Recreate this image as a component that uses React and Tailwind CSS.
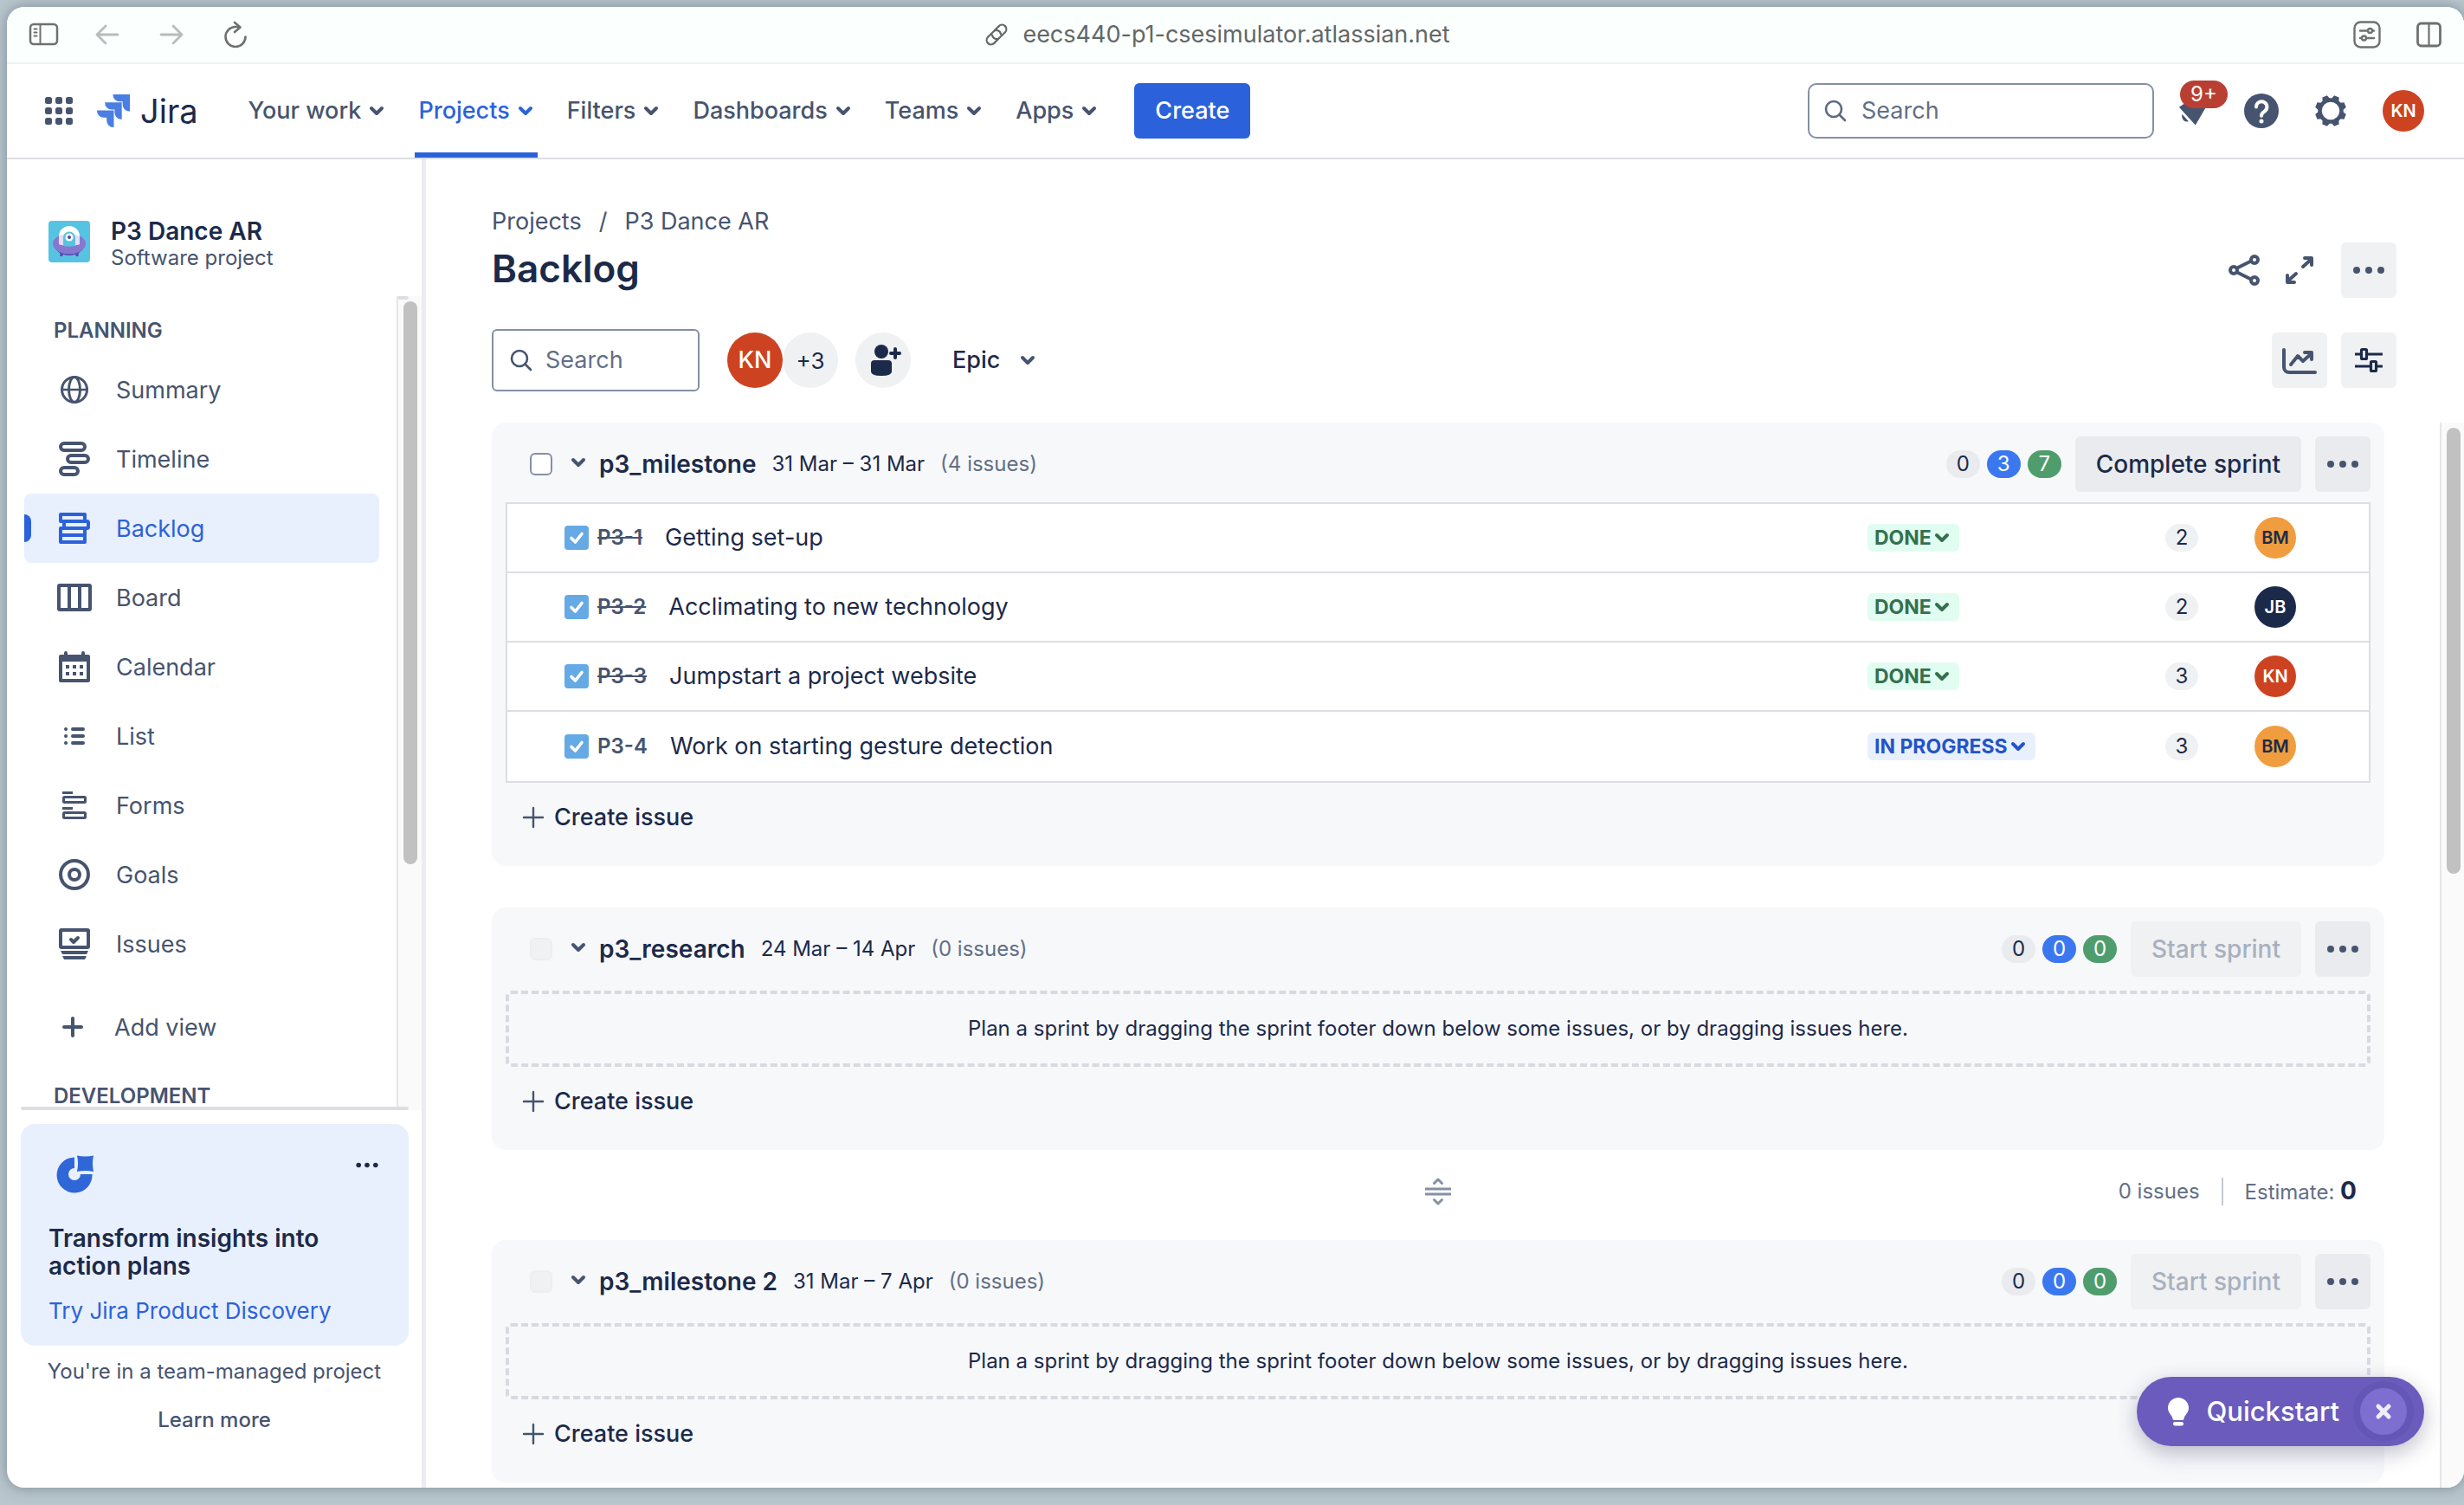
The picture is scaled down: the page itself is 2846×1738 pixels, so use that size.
import React from "react";

const CHEVRON = "M4 7l6 6 6-6";

function Chevron({ className = "size-5", width = 4 }) {
  return (
    <svg viewBox="0 0 20 20" className={className} fill="none" stroke="currentColor" strokeWidth={width} strokeLinecap="round" strokeLinejoin="round" aria-hidden="true">
      <path d={CHEVRON} />
    </svg>
  );
}

function Dots({ className = "w-10" }) {
  return (
    <svg viewBox="0 0 40 10" className={className} fill="currentColor" aria-hidden="true">
      <circle cx="6" cy="5" r="4" />
      <circle cx="20" cy="5" r="4" />
      <circle cx="34" cy="5" r="4" />
    </svg>
  );
}

function SearchIcon() {
  return (
    <svg viewBox="0 0 28 28" className="size-7 shrink-0" fill="none" stroke="currentColor" strokeWidth="2.6" strokeLinecap="round" aria-hidden="true">
      <circle cx="12" cy="12" r="9" />
      <path d="M18.5 18.5l6.500 6.500" />
    </svg>
  );
}

function BrowserBar() {
  return (
    <div className="flex h-[66px] shrink-0 items-center border-b-2 border-[#eff1f1] bg-[#fbfffe] pl-6 pr-6 text-[#6f7170]">
      <button aria-label="Toggle sidebar" className="mr-[42px]">
        <svg viewBox="0 0 36 28" className="h-7 w-9" fill="none" stroke="currentColor" strokeWidth="2.500" strokeLinecap="round">
          <rect x="3" y="2" width="31" height="23" rx="4" />
          <path d="M14.500 2v23M7.500 7.500h3M7.500 11.500h3M7.500 15.500h3" strokeWidth="2" />
        </svg>
      </button>
      <button aria-label="Back" className="mr-[46px] text-[#b9bcbb]">
        <svg viewBox="0 0 28 24" className="h-6 w-7" fill="none" stroke="currentColor" strokeWidth="2.800" strokeLinecap="round" strokeLinejoin="round">
          <path d="M26 12H2M12 2L2 12l10 10" />
        </svg>
      </button>
      <button aria-label="Forward" className="mr-[46px] text-[#b9bcbb]">
        <svg viewBox="0 0 28 24" className="h-6 w-7" fill="none" stroke="currentColor" strokeWidth="2.800" strokeLinecap="round" strokeLinejoin="round">
          <path d="M2 12h24M16 2l10 10-10 10" />
        </svg>
      </button>
      <button aria-label="Reload">
        <svg viewBox="0 0 28 32" className="h-8 w-7" fill="none" stroke="currentColor" strokeWidth="2.600" strokeLinecap="round" strokeLinejoin="round">
          <path d="M25.500 18.500A11.500 11.500 0 1 1 14 7h5M13 2l6.500 5.500L13 13" />
        </svg>
      </button>
      <div className="flex flex-1 items-center justify-center gap-4 pr-48 text-[27px] text-[#636766]">
        <svg viewBox="0 0 28 28" className="size-7" fill="none" stroke="currentColor" strokeWidth="2.200" strokeLinecap="round">
          <g transform="rotate(-45 14 14)">
            <path d="M12 19H5a5 5 0 0 1 0-10h9a5 5 0 0 1 4 8" />
            <path d="M16 9h7a5 5 0 0 1 0 10h-9a5 5 0 0 1-4-8" />
          </g>
        </svg>
        <span>eecs440-p1-csesimulator.atlassian.net</span>
      </div>
      <button aria-label="Page settings" className="mr-10">
        <svg viewBox="0 0 32 32" className="size-8" fill="none" stroke="currentColor" strokeWidth="2.400" strokeLinecap="round">
          <rect x="1.500" y="1.500" width="29" height="29" rx="7" />
          <path d="M8 11.500h9M22.500 11.500H24M8 20h1.500M15.500 20H24" />
          <circle cx="19.500" cy="11.500" r="2.500" />
          <circle cx="12.500" cy="20" r="2.500" />
        </svg>
      </button>
      <button aria-label="Tabs">
        <svg viewBox="0 0 32 30" className="h-[30px] w-8" fill="none" stroke="currentColor" strokeWidth="2.800">
          <rect x="2.500" y="2" width="26" height="26" rx="4" />
          <path d="M15.500 2v26" strokeWidth="2.200" />
        </svg>
      </button>
    </div>
  );
}

const MENU = ["Your work", "Projects", "Filters", "Dashboards", "Teams", "Apps"];
const LOGO_WING = "M0 0h19.500v19.500h-.700a7.600 7.600 0 0 1-7.600-7.600V8.300H7.600A7.600 7.600 0 0 1 0 .700z";

function TopNav() {
  return (
    <header className="flex h-[110px] shrink-0 items-center border-b-2 border-[#dddee3] pl-11 pr-[46px] text-[#46546f]">
      <button aria-label="App switcher">
        <svg viewBox="0 0 32 32" className="size-8" fill="currentColor">
          {[0, 12, 24].map((y) => [0, 12, 24].map((x) => <rect key={x + "-" + y} x={x} y={y} width="8" height="8" rx="2.500" />))}
        </svg>
      </button>
      <a href="#home" className="ml-7 flex items-center gap-3" aria-label="Jira">
        <svg viewBox="0 0 38 38" className="size-[38px]" fill="#4a7ee2">
          <path d={LOGO_WING} transform="translate(18.500 0)" />
          <path d={LOGO_WING} transform="translate(9.200 9.200)" />
          <path d={LOGO_WING} transform="translate(0 18.400)" />
        </svg>
        <span className="text-[38px] leading-none text-[#1c2a4a]">Jira</span>
      </a>
      <nav className="ml-[54px] flex h-full items-stretch gap-[30px]">
        {MENU.map((label) => {
          const active = label === "Projects";
          return (
            <button
              key={label}
              className={
                "flex items-center gap-2 border-b-[6px] px-1 pt-1.5 text-[27px] font-medium " +
                (active ? "border-[#2b62db] text-[#2b62db]" : "border-transparent")
              }
            >
              {label}
              <Chevron />
            </button>
          );
        })}
      </nav>
      <button className="ml-[38px] h-16 rounded-md bg-[#2b62db] px-6 text-[27px] font-medium text-white">Create</button>
      <label className="ml-auto flex h-16 w-[400px] items-center gap-3 rounded-[10px] border-2 border-[#8590a2] px-4 text-[#5d6a82]">
        <SearchIcon />
        <input aria-label="Search" placeholder="Search" className="min-w-0 flex-1 bg-transparent pl-1 text-[27px] outline-none placeholder:text-[#626f86]" />
      </label>
      <button aria-label="Notifications, more than 9" className="relative ml-6 h-12 w-14">
        <svg viewBox="0 0 40 40" className="absolute left-1 top-2 size-9" fill="currentColor">
          <path d="M1 13L13 5l22 9-13 22z" />
          <path d="M5 22l8 9c-4 3-10-3-8-9z" />
        </svg>
        <span className="absolute -top-[11px] left-[6px] flex h-8 items-center rounded-full bg-[#b93f33] px-3 text-2xl text-white">9+</span>
      </button>
      <button aria-label="Help" className="ml-6">
        <svg viewBox="0 0 40 40" className="size-10" fill="none">
          <circle cx="20" cy="20" r="20" fill="currentColor" />
          <path d="M14 15.500a6.200 6.200 0 1 1 9.500 5.200c-2.300 1.400-3.500 2.300-3.500 5" stroke="#fff" strokeWidth="4" strokeLinecap="round" />
          <circle cx="20" cy="32" r="2.500" fill="#fff" />
        </svg>
      </button>
      <button aria-label="Settings" className="ml-10">
        <svg viewBox="-20 -20 40 40" className="size-10" fill="none" stroke="currentColor">
          <circle r="12.500" strokeWidth="4.500" />
          {[0, 45, 90, 135, 180, 225, 270, 315].map((a) => (
            <path key={a} d="M-4.500 -13.500l1.500-4.500h6l1.500 4.500z" fill="currentColor" stroke="none" transform={`rotate(${a + 22.500})`} />
          ))}
        </svg>
      </button>
      <button aria-label="Profile" className="ml-10 flex size-12 items-center justify-center rounded-full bg-[#cd4322] text-[20px] font-semibold text-white">KN</button>
    </header>
  );
}

const icon = { fill: "none", stroke: "currentColor", strokeWidth: 4, className: "size-12 shrink-0", viewBox: "0 0 48 48", "aria-hidden": true };

const ICONS = {
  Summary: (
    <svg {...icon} strokeWidth="3">
      <circle cx="24" cy="24" r="14.500" />
      <ellipse cx="24" cy="24" rx="6.500" ry="14.500" />
      <path d="M9 24h30" strokeWidth="2.500" />
    </svg>
  ),
  Timeline: (
    <svg {...icon}>
      <rect x="8" y="6" width="28" height="8" rx="4" />
      <rect x="16" y="20" width="24" height="8" rx="4" />
      <rect x="8" y="34" width="20" height="8" rx="4" />
    </svg>
  ),
  Backlog: (
    <svg {...icon} strokeLinejoin="round">
      <path d="M36 16V8H8v8h30.500q1.500 0 1.500 1.500v5q0 1.500-1.500 1.500H12v-8M36 24v16H8V24h6M8 32h28" />
    </svg>
  ),
  Board: (
    <svg {...icon} strokeLinejoin="round">
      <rect x="6" y="10" width="36" height="28" rx="1" />
      <path d="M18 10v28M30 10v28" />
    </svg>
  ),
  Calendar: (
    <svg {...icon} strokeLinejoin="round">
      <path d="M8 12h32v28H8zM8 16h32M14 12V8M34 12V8" strokeLinecap="round" />
      <path d="M14 24h4M22 24h4M30 24h4M14 32h4M22 32h4M30 32h4" />
    </svg>
  ),
  List: (
    <svg {...icon} strokeLinecap="round">
      <path d="M22 16h12M22 24h12M22 32h12M14 16h.1M14 24h.1M14 32h.1" />
    </svg>
  ),
  Forms: (
    <svg {...icon} strokeWidth="3">
      <path d="M10 9.500h12M10 27.500h12" />
      <rect x="11.500" y="14.500" width="25" height="6" rx="1" />
      <rect x="11.500" y="32.500" width="25" height="6" rx="1" />
    </svg>
  ),
  Goals: (
    <svg {...icon}>
      <circle cx="24" cy="24" r="16" />
      <circle cx="24" cy="24" r="6" />
    </svg>
  ),
  Issues: (
    <svg {...icon} strokeLinejoin="round">
      <rect x="8" y="8" width="32" height="20" rx="1" />
      <path d="M20 19l3 3 5-5" strokeLinecap="round" />
      <path d="M8 32h32l-2 4H10zM10 38h28l-2 4H12z" fill="currentColor" stroke="none" />
    </svg>
  ),
};

function Sidebar() {
  return (
    <aside className="flex w-[484px] shrink-0 flex-col border-r-[5px] border-[#ebecef] text-[#46546f]">
      <div className="flex h-[158px] shrink-0 items-start gap-6 pl-12 pt-[68px]">
        <svg viewBox="0 0 48 48" className="mt-[3px] size-12 shrink-0">
          <rect width="48" height="48" rx="4" fill="#57c3e2" />
          <path d="M13 36h4l-.500 5h-3zM31 36h4l-.500 5h-3z" fill="#5a4cb4" />
          <path d="M8 32c8 10 24 10 32 0-7 9-25 9-32 0z" fill="#5a4cb4" stroke="#5a4cb4" />
          <ellipse cx="24" cy="26.500" rx="19" ry="11.500" fill="#8777d0" />
          <path d="M12 27V18a12 12 0 0 1 24 0v9q-12 4-24 0z" fill="#fff" />
          <path d="M12 27V17q3-2 24 0v10q-12 4-24 0z" fill="#e3dff5" />
          <path d="M17 29V19.500a7 7 0 0 1 14 0V29q-7 1.500-14 0z" fill="#57c3e2" />
          <circle cx="24" cy="19" r="4.500" fill="#fff" />
          <circle cx="24" cy="19" r="2" fill="#5243aa" />
        </svg>
        <div>
          <p className="text-[28px] leading-[30px] font-semibold text-[#1c2a4a]">P3 Dance AR</p>
          <p className="text-2xl leading-8">Software project</p>
        </div>
      </div>
      <div className="flex min-h-0 flex-1">
        <div className="flex min-w-0 flex-1 flex-col">
          <nav className="min-h-0 flex-1 overflow-hidden pl-5 pr-5">
            <h2 className="mt-3 flex h-14 items-center pl-[34px] text-2xl leading-6 font-semibold">PLANNING</h2>
            {Object.keys(ICONS).map((name) => {
              const active = name === "Backlog";
              return (
                <a
                  key={name}
                  href={"#" + name.toLowerCase()}
                  className={"flex h-20 items-center rounded-lg text-[27px] " + (active ? "bg-[#e9f0fd] text-[#2b62db]" : "")}
                >
                  <span className={"mr-[26px] h-8 w-2 rounded-r-lg " + (active ? "bg-[#2b62db]" : "")} />
                  {ICONS[name]}
                  <span className="pl-6 pt-0.5">{name}</span>
                </a>
              );
            })}
            <button className="mt-4 flex h-20 items-center pl-8 text-[27px]">
              <svg {...icon} strokeLinecap="round">
                <path d="M24 14v20M14 24h20" />
              </svg>
              <span className="pl-6 pt-0.5">Add view</span>
            </button>
            <h2 className="mt-4 pt-3 pl-[34px] text-2xl leading-6 font-semibold">DEVELOPMENT</h2>
          </nav>
          <div className="z-10 -mr-[14px] -mt-1 ml-4 h-1 shrink-0 rounded-full bg-[#dddee3]" />
        </div>
        <div className="w-[29px] border-l-2 border-[#e6e6e8] bg-[#fafafa]" aria-hidden="true">
          <div className="mb-0.5 h-1 w-3 rounded-r-sm bg-[#dddee3]" />
          <div className="ml-[6px] h-[650px] w-4 rounded-full bg-[#c1c1c1]" />
        </div>
      </div>
      <section className="mx-4 mr-[15px] mt-4 rounded-2xl bg-[#e9f0fd] px-8 pb-5 pt-8">
        <div className="flex items-start justify-between">
          <svg viewBox="0 0 48 48" className="ml-1.5 size-12" fill="#3067d8">
            <path d="M24 6.500A20.500 20.500 0 1 0 44.500 26H31a7 7 0 1 1-7-7z" />
            <path d="M27 4.500q9.500 2 19 0-2 9 0 18.500-9.500-2-19 0 2-9.500 0-18.500z" />
          </svg>
          <button aria-label="More" className="mt-3 mr-0.5 text-[#1c2a4a]">
            <Dots className="w-7" />
          </button>
        </div>
        <h3 className="mt-9 text-[28px] leading-8 font-semibold text-[#1c2a4a]">Transform insights into action plans</h3>
        <a href="#discovery" className="mt-4 block text-[26px] leading-10 text-[#2b62db]">Try Jira Product Discovery</a>
      </section>
      <div className="flex flex-col items-center pb-[60px] pt-3 text-2xl">
        <p className="leading-9">You're in a team-managed project</p>
        <button className="mt-5 leading-9 font-medium">Learn more</button>
      </div>
    </aside>
  );
}

function IconButton({ label, children, className = "bg-[#f0f1f3]" }) {
  return (
    <button aria-label={label} className={"flex size-16 shrink-0 items-center justify-center rounded-md text-[#46546f] " + className}>
      {children}
    </button>
  );
}

function PageHeader() {
  return (
    <div className="flex items-end justify-between pr-[78px] pt-[52px]">
      <div className="pb-1">
        <p className="flex gap-5 text-[27px] leading-10 text-[#46546f]">
          <a href="#projects">Projects</a>
          <span>/</span>
          <a href="#dance">P3 Dance AR</a>
        </p>
        <h1 className="mt-1 text-[44px] leading-[60px] font-semibold text-[#1c2a4a]">Backlog</h1>
      </div>
      <div className="flex items-center text-[#46546f]">
        <IconButton label="Share" className="">
          <svg viewBox="0 0 48 48" className="size-12" fill="none" stroke="currentColor" strokeWidth="4">
            <circle cx="12" cy="24" r="4" />
            <circle cx="36" cy="12" r="4" />
            <circle cx="36" cy="36" r="4" />
            <path d="M15 22l17-8.500M15 26l17 8.500" />
          </svg>
        </IconButton>
        <IconButton label="Full screen" className="mr-4">
          <svg viewBox="0 0 48 48" className="size-12" fill="none" stroke="currentColor" strokeWidth="4" strokeLinecap="round" strokeLinejoin="round">
            <path d="M28 20l10-9M30 10h8v8M20 28L10 37M10 30v8h8" />
          </svg>
        </IconButton>
        <IconButton label="More actions">
          <Dots />
        </IconButton>
      </div>
    </div>
  );
}

function Toolbar() {
  return (
    <div className="flex h-[72px] items-center pr-[78px] text-[#1c2a4a]">
      <label className="flex h-full w-60 items-center gap-3.5 rounded-md border-2 border-[#8590a2] px-[18px] text-[#46546f]">
        <SearchIcon />
        <input aria-label="Search backlog" placeholder="Search" className="min-w-0 flex-1 bg-transparent text-[27px] outline-none placeholder:text-[#626f86]" />
      </label>
      <button className="z-10 ml-8 flex size-16 items-center justify-center rounded-full bg-[#cd4322] text-[27px] font-medium text-white">KN</button>
      <button className="flex size-16 items-center justify-center rounded-full bg-[#f0f1f3] text-[26px]">+3</button>
      <button aria-label="Add people" className="ml-5 flex size-16 items-center justify-center rounded-full bg-[#f0f1f3]">
        <svg viewBox="0 0 48 48" className="size-12" fill="currentColor">
          <circle cx="22" cy="14" r="8" />
          <path d="M10 28a4 4 0 0 1 4-4h16a4 4 0 0 1 4 4v9q0 5-12 5t-12-5z" />
          <path d="M38 11v10M33 16h10" stroke="currentColor" strokeWidth="4" strokeLinecap="round" />
        </svg>
      </button>
      <button className="ml-12 flex items-center gap-[22px] text-[27px] font-medium">
        Epic
        <Chevron className="size-5 text-[#46546f]" />
      </button>
      <div className="ml-auto flex gap-4">
        <IconButton label="Insights">
          <svg viewBox="0 0 48 48" className="size-12" fill="none" stroke="currentColor" strokeWidth="4" strokeLinecap="round" strokeLinejoin="round">
            <path d="M6 12v20a6 6 0 0 0 6 6h30M14 29l8-10 6 6 10-9M30 15h8v8" />
          </svg>
        </IconButton>
        <IconButton label="View settings">
          <svg viewBox="0 0 48 48" className="size-12 text-[#1c2a4a]" fill="none" stroke="currentColor" strokeWidth="3.200">
            <path d="M8 17h7M23 17h17M8 31h17M33 31h7" />
            <rect x="15.500" y="11.500" width="6" height="11" rx="1" />
            <rect x="26.500" y="25.500" width="6" height="11" rx="1" />
          </svg>
        </IconButton>
      </div>
    </div>
  );
}

const BADGES = ["bg-[#e9ebee] text-[#1c2a4a]", "bg-[#3b78f0] text-white", "bg-[#4f9d6c] text-white"];

function Sprint({ name, dates, count, totals, action, disabled, children }) {
  return (
    <section className="rounded-2xl bg-[#f7f8fa] px-4 pb-6 pt-4 text-[#1c2a4a]">
      <div className="flex h-16 items-center pl-7">
        <input
          type="checkbox"
          aria-label={"Select " + name}
          disabled={disabled}
          className="size-[26px] shrink-0 appearance-none rounded-md border-2 border-[#8590a2] bg-white disabled:border-[#edeef0] disabled:bg-[#f0f1f3]"
        />
        <button aria-label="Collapse" className="ml-5 text-[#46546f]">
          <Chevron className="-mt-1 size-5" />
        </button>
        <h2 className="ml-3.5 text-[28px] font-semibold">{name}</h2>
        <span className="ml-[18px] text-2xl">{dates}</span>
        <span className="ml-[18px] text-2xl text-[#626f86]">({count} issues)</span>
        <div className="ml-auto flex items-center gap-2">
          {totals.map((n, i) => (
            <span key={i} className={"flex h-8 w-[39px] items-center justify-center rounded-full text-2xl " + BADGES[i]}>
              {n}
            </span>
          ))}
        </div>
        <button
          disabled={disabled}
          className="ml-4 h-16 rounded-md bg-[#e9ebee] px-6 text-[28px] font-medium disabled:bg-[#f0f1f3] disabled:text-[#a8b0bf]"
        >
          {action}
        </button>
        <IconButton label="Sprint actions" className="ml-4 bg-[#e9ebee]">
          <Dots />
        </IconButton>
      </div>
      {children}
      <button className="mt-2 flex h-16 items-center gap-2 pl-4 text-[27px] font-medium">
        <svg viewBox="0 0 32 32" className="size-8 text-[#46546f]" fill="none" stroke="currentColor" strokeWidth="2.400" strokeLinecap="round">
          <path d="M16 5v22M5 16h22" />
        </svg>
        Create issue
      </button>
    </section>
  );
}

const ISSUES = [
  { key: "P3-1", title: "Getting set-up", status: "DONE", points: 2, who: "BM" },
  { key: "P3-2", title: "Acclimating to new technology", status: "DONE", points: 2, who: "JB" },
  { key: "P3-3", title: "Jumpstart a project website", status: "DONE", points: 3, who: "KN" },
  { key: "P3-4", title: "Work on starting gesture detection", status: "IN PROGRESS", points: 3, who: "BM" },
];

const PEOPLE = { BM: "bg-[#f09d3f] text-[#1c2a4a]", JB: "bg-[#1c2a4a] text-white", KN: "bg-[#cd4322] text-white" };

function IssueList() {
  return (
    <ul className="mt-3 border-2 border-[#dddee5] bg-white">
      {ISSUES.map(({ key, title, status, points, who }, i) => {
        const done = status === "DONE";
        return (
          <li key={key} className={"flex h-20 items-center pl-[66px] pr-[84px] " + (i < 3 ? "border-b-2 border-[#dddee5]" : "")}>
            <svg viewBox="0 0 28 28" className="size-7 shrink-0" aria-hidden="true">
              <rect width="28" height="28" rx="4" fill="#65a9e5" />
              <path d="M8 14.500l4.500 4.500L20 9.500" fill="none" stroke="#fff" strokeWidth="3.600" strokeLinecap="round" strokeLinejoin="round" />
            </svg>
            <a href={"#" + key} className={"ml-[10px] text-2xl font-semibold text-[#46546f] " + (done ? "line-through decoration-2" : "")}>
              {key}
            </a>
            <span className="ml-[26px] text-[27px]">{title}</span>
            <div className="ml-auto w-[344px]">
              <button
                className={
                  "flex h-8 items-center gap-0.5 rounded-md pl-2 pr-[10px] text-[23px] font-bold " +
                  (done ? "bg-[#e1fdf1] text-[#35704e]" : "bg-[#e9f0fd] text-[#2453c8]")
                }
              >
                {status}
                <Chevron className="size-5" />
              </button>
            </div>
            <span className="flex h-8 w-[38px] items-center justify-center rounded-full bg-[#f0f1f3] text-2xl">{points}</span>
            <span className={"ml-[65px] flex size-12 items-center justify-center rounded-full text-[20px] font-semibold " + PEOPLE[who]}>{who}</span>
          </li>
        );
      })}
    </ul>
  );
}

function EmptySprint() {
  return (
    <p className="mt-4 flex h-[88px] items-center justify-center rounded-md border-4 border-dashed border-[#d8dae2] text-2xl">
      Plan a sprint by dragging the sprint footer down below some issues, or by dragging issues here.
    </p>
  );
}

function SprintFooter() {
  return (
    <div className="grid h-[104px] grid-cols-[1fr_auto_1fr] items-center pb-2 text-2xl text-[#626f86]">
      <span />
      <svg viewBox="0 0 32 36" className="h-9 w-8 text-[#8590a2]" fill="none" stroke="currentColor" strokeWidth="3" strokeLinejoin="round">
        <path d="M1 15h30M1 21h30" />
        <path d="M11.500 8.500L16 4l4.500 4.500M11.500 27.500L16 32l4.500-4.500" strokeLinecap="round" />
      </svg>
      <div className="flex items-center justify-end pr-8">
        <span>0 issues</span>
        <span className="mx-[25px] h-8 w-0.5 bg-[#c4c9d3]" />
        <span>
          Estimate: <b className="text-[28px] font-bold text-[#1c2a4a]">0</b>
        </span>
      </div>
    </div>
  );
}

function Quickstart() {
  return (
    <div className="absolute bottom-12 right-[46px] z-20 flex h-20 items-center rounded-full bg-[#6b5bbd] pl-8 pr-5 text-white shadow-[0_8px_24px_rgba(40,40,80,0.300)]">
      <button className="flex items-center gap-4 text-[31px] font-medium">
        <svg viewBox="0 0 32 36" className="h-9 w-8" fill="currentColor">
          <path d="M16 2a12 12 0 0 1 12 12c0 6-5 8-5.500 12.500q-.3 1.500-2 1.500h-9q-1.700 0-2-1.500C9 22 4 20 4 14A12 12 0 0 1 16 2z" />
          <rect x="10" y="30" width="12" height="4.500" rx="2.200" />
        </svg>
        Quickstart
      </button>
      <button aria-label="Close" className="ml-6 flex size-[54px] items-center justify-center rounded-full bg-[#7d6ecf] ring-8 ring-[#6456b4]">
        <svg viewBox="0 0 20 20" className="size-5" fill="none" stroke="#efedfa" strokeWidth="5" strokeLinecap="round">
          <path d="M4 4l12 12M16 4L4 16" />
        </svg>
      </button>
    </div>
  );
}

export default function App() {
  return (
    <div className="h-screen bg-[#b9c6ce] pb-5 pl-2 pt-2 font-[Inter,sans-serif]">
      <div className="relative flex h-full flex-col overflow-hidden rounded-[20px] bg-white shadow-[0_0_16px_rgba(60,80,90,0.500)]">
        <BrowserBar />
        <TopNav />
        <div className="flex min-h-0 flex-1">
          <Sidebar />
          <main className="flex min-w-0 flex-1 flex-col pl-[76px]">
            <PageHeader />
            <div className="mt-9">
              <Toolbar />
            </div>
            <div className="mt-9 flex min-h-0 flex-1">
              <div className="min-w-0 flex-1 overflow-hidden pr-16">
                <Sprint name="p3_milestone" dates="31 Mar – 31 Mar" count={4} totals={[0, 3, 7]} action="Complete sprint">
                  <IssueList />
                </Sprint>
                <div className="h-12" />
                <Sprint name="p3_research" dates="24 Mar – 14 Apr" count={0} totals={[0, 0, 0]} action="Start sprint" disabled>
                  <EmptySprint />
                </Sprint>
                <SprintFooter />
                <Sprint name="p3_milestone 2" dates="31 Mar – 7 Apr" count={0} totals={[0, 0, 0]} action="Start sprint" disabled>
                  <EmptySprint />
                </Sprint>
              </div>
              <div className="w-7 shrink-0 border-l-2 border-[#e6e6e8] bg-[#fafafa] pl-[6px] pt-[6px]" aria-hidden="true">
                <div className="h-[515px] w-4 rounded-full bg-[#c1c1c1]" />
              </div>
            </div>
          </main>
        </div>
        <Quickstart />
      </div>
    </div>
  );
}
